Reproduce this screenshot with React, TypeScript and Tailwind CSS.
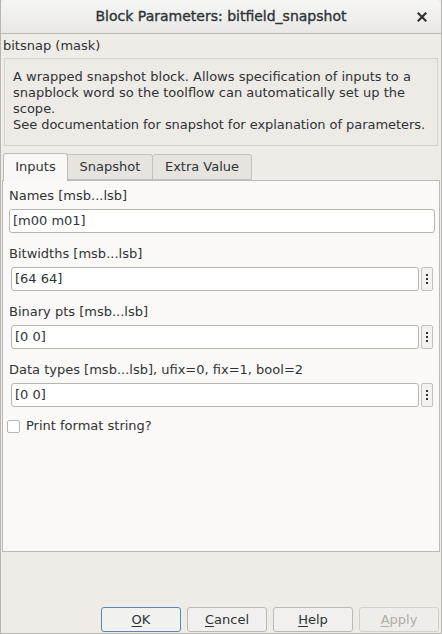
import React from "react";

const font = { fontFamily: '"DejaVu Sans", "Noto Sans", sans-serif' };

function Dots() {
  return (
    <div className="w-[12px] h-[24px] ml-[2px] border border-[#c4c0bb] rounded-[2px] bg-[#f4f2ef] flex flex-col items-center justify-center gap-[2px]">
      <div className="w-[2px] h-[2px] bg-[#333]" />
      <div className="w-[2px] h-[2px] bg-[#333]" />
      <div className="w-[2px] h-[2px] bg-[#333]" />
    </div>
  );
}

function Field({ label, value, dots = true }: { label: string; value: string; dots?: boolean }) {
  return (
    <div className="flex flex-col">
      <div className="h-[18px] leading-[18px] pl-[6px] text-[13px] text-[#2e3436] mb-[4px]">{label}</div>
      <div className={`flex items-center ${dots ? "pl-[8px] pr-[6px]" : "pl-[6px] pr-[4px]"}`}>
        <div className="flex-1 h-[24px] bg-white border border-[#b8b4ae] rounded-[3px] flex items-center pl-[3px] text-[13px] text-[#2e3436]">
          {value}
        </div>
        {dots && <Dots />}
      </div>
    </div>
  );
}

function Btn({ label, u, primary, disabled }: { label: string; u: number; primary?: boolean; disabled?: boolean }) {
  return (
    <div
      className={`w-[80px] h-[25px] rounded-[3px] border flex items-center justify-center text-[13px] ${
        primary ? "border-[#5a86b4] bg-[#f1f1f0]" : disabled ? "border-[#d3cfca] bg-[#efedea]" : "border-[#bcb8b3] bg-[#f1f0ee]"
      } ${disabled ? "text-[#b0aca6]" : "text-[#2e3436]"}`}
    >
      <span>
        {label.slice(0, u)}
        <span className="underline underline-offset-2">{label[u]}</span>
        {label.slice(u + 1)}
      </span>
    </div>
  );
}

export default function App() {
  return (
    <div style={font} className="w-[442px] h-[634px] bg-[#efebe7] flex flex-col border-x border-b border-[#b9b6b1] overflow-hidden">
      <div className="h-[34px] shrink-0 bg-gradient-to-b from-[#f6f6f5] to-[#e9e8e6] border-b border-[#bdbab5] relative flex items-center justify-center rounded-t-[5px]">
        <span className="text-[14px] text-[#2e3436] [-webkit-text-stroke:0.35px_#2e3436]">Block Parameters: bitfield_snapshot</span>
        <svg className="absolute right-[14px] top-[12px]" width="10" height="10" viewBox="0 0 10 10">
          <path d="M1.5 1.5 L8.5 8.5 M8.5 1.5 L1.5 8.5" stroke="#2e3436" strokeWidth="2.2" strokeLinecap="square" />
        </svg>
      </div>
      <div className="h-[22px] leading-[22px] pl-[2px] text-[13px] text-[#2e3436] mt-[1px]">bitsnap (mask)</div>
      <div className="mx-[3px] mt-[1px] h-[88px] border border-[#d6d2cd] bg-[#eeeae6] pl-[8px] pr-[1px] pt-[10px] text-[13px] leading-[16px] text-[#2e3436]">
        A wrapped snapshot block. Allows specification of inputs to a snapblock word so the toolflow can automatically set up the scope.
        <br />
        <span className="whitespace-nowrap tracking-[-0.05px]">See documentation for snapshot for explanation of parameters.</span>
      </div>
      <div className="mt-[6px] mx-[1px] flex flex-col">
        <div className="flex items-end h-[28px] pl-[1px]">
          <div className="w-[65px] h-[28px] bg-[#faf8f6] border border-b-0 border-[#bdb9b4] rounded-t-[3px] flex items-center justify-center text-[13px] text-[#2e3436] relative z-10 -mb-px pb-[1px]">
            Inputs
          </div>
          <div className="w-[85px] h-[26px] bg-[#e7e3df] border border-[#c4c0bb] border-l-0 rounded-tr-[3px] flex items-center justify-center text-[13px] text-[#2e3436]">
            Snapshot
          </div>
          <div className="w-[99px] h-[26px] bg-[#e7e3df] border border-[#c4c0bb] border-l-0 rounded-t-[3px] flex items-center justify-center text-[13px] text-[#2e3436]">
            Extra Value
          </div>
        </div>
        <div className="h-[372px] bg-[#fbf9f7] border border-[#bdb9b4] flex flex-col pt-[6px]">
          <Field label="Names [msb...lsb]" value="[m00 m01]" dots={false} />
          <div className="h-[12px]" />
          <Field label="Bitwidths [msb...lsb]" value="[64 64]" />
          <div className="h-[12px]" />
          <Field label="Binary pts [msb...lsb]" value="[0 0]" />
          <div className="h-[12px]" />
          <Field label="Data types [msb...lsb], ufix=0, fix=1, bool=2" value="[0 0]" />
          <div className="flex items-center mt-[12px] pl-[4px] h-[14px]">
            <div className="w-[13px] h-[13px] bg-white border border-[#b8b4ae] rounded-[2px]" />
            <span className="ml-[6px] text-[13px] text-[#2e3436]">Print format string?</span>
          </div>
        </div>
      </div>
      <div className="flex-1" />
      <div className="flex justify-end gap-[6px] pr-[2px] mb-[1px]">
        <Btn label="OK" u={0} primary />
        <Btn label="Cancel" u={0} />
        <Btn label="Help" u={0} />
        <Btn label="Apply" u={0} disabled />
      </div>
    </div>
  );
}
